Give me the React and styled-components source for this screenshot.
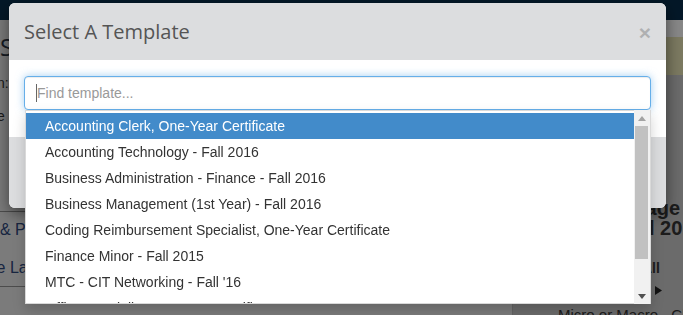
import React from "react";
import styled, { createGlobalStyle } from "styled-components";

const Global = createGlobalStyle`
  html, body { margin: 0; padding: 0; }
  body { font-family: "Liberation Sans", Arial, sans-serif; background: #e0e0e0; }
  * { box-sizing: border-box; }
`;

const Page = styled.div`
  position: relative;
  width: 683px;
  height: 315px;
  overflow: hidden;
  display: flex;
  flex-direction: column;
  background: #e0e0e0;
`;

const Navbar = styled.div`
  height: 20px;
  flex: none;
  background: #092d49;
`;

const Main = styled.div`
  flex: 1;
  display: grid;
  grid-template-columns: 513px 1fr;
`;

const LeftCol = styled.div`
  border-right: 1px solid #b5b5b5;
  display: flex;
  flex-direction: column;
  color: #2e2e2e;
`;

const PageTitle = styled.h1`
  margin: 14px 0 0;
  font: 400 24px/26px "Open Sans", sans-serif;
  color: #2a3340;
`;

const MetaLine = styled.div`
  margin: 13px 0 0 -3px;
  font-size: 14px;
  line-height: 20px;
  color: #333;
`;

const LinkBlock = styled.div`
  margin-top: 85px;
  border-top: 1px solid #8a8a8a;
  border-bottom: 1px solid #8a8a8a;
  display: flex;
  flex-direction: column;
  gap: 2px;
`;

const PlanLink = styled.div`
  font-size: 16px;
  line-height: 36px;
  color: #2c4577;
  margin-left: ${(p) => p.$shift || 0}px;
`;

const RightCol = styled.div`
  background: #c3c3c3;
  display: flex;
  flex-direction: column;
`;

const SubBar = styled.div`
  height: 17px;
  background: #f8f8f8;
`;

const Notice = styled.div`
  height: 38px;
  background: #e2deb1;
  display: flex;
  align-items: center;
  justify-content: flex-end;
  padding-right: 11px;
  font-size: 14px;
  color: #3a3520;
`;

const RightBody = styled.div`
  padding: 123px 0 0 45px;
  display: flex;
  flex-direction: column;
  color: #333;
`;

const CardTitle = styled.div`
  margin-left: 62px;
  font: 700 20px/20px "Liberation Sans", Arial, sans-serif;
  white-space: nowrap;
`;

const FilterLabel = styled.div`
  margin: 20px 0 0 84px;
  font: 700 14px/20px "Liberation Sans", Arial, sans-serif;
`;

const Caret = styled.svg`
  margin: 8px 0 0 97px;
  display: block;
`;

const CourseLine = styled.div`
  margin-top: 10px;
  font-size: 15px;
  line-height: 20px;
  white-space: nowrap;
`;

const Backdrop = styled.div`
  position: absolute;
  inset: 0;
  background: rgba(0, 0, 0, 0.45);
`;

const Modal = styled.div`
  position: absolute;
  left: 9px;
  top: 3px;
  width: 657px;
  border-radius: 6px;
  background: #fff;
  box-shadow: 0 5px 15px rgba(0, 0, 0, 0.5);
  display: flex;
  flex-direction: column;
`;

const ModalHeader = styled.div`
  background: #dcdddf;
  border-radius: 6px 6px 0 0;
  padding: 15px;
  display: flex;
  justify-content: space-between;
  align-items: flex-start;
`;

const ModalTitle = styled.h4`
  margin: 0;
  font: 400 20px/27px "Open Sans", sans-serif;
  color: #555;
`;

const CloseButton = styled.button`
  border: 0;
  background: none;
  padding: 0;
  margin-top: 4px;
  font: 700 21px/1 "Liberation Sans", Arial, sans-serif;
  color: #000;
  opacity: 0.2;
  cursor: pointer;
`;

const ModalBody = styled.div`
  padding: 16px 15px 27px;
`;

const SearchWrap = styled.div`
  position: relative;
`;

const SearchInput = styled.input`
  display: block;
  width: 100%;
  height: 34px;
  padding: 6px 12px;
  font: 400 14px "Liberation Sans", Arial, sans-serif;
  color: #555;
  border: 1px solid #66afe9;
  border-radius: 4px;
  outline: 0;
  caret-color: transparent;
  box-shadow: inset 0 1px 1px rgba(0, 0, 0, 0.075), 0 0 8px rgba(102, 175, 233, 0.6);
  &::placeholder { color: #999; }
`;

const TextCursor = styled.span`
  position: absolute;
  left: 12px;
  top: 8px;
  width: 1px;
  height: 18px;
  background: #666;
  pointer-events: none;
`;

const ModalFooter = styled.div`
  height: 71px;
  background: #dcdddf;
  border-radius: 0 0 6px 6px;
`;

const Dropdown = styled.div`
  position: absolute;
  top: 100%;
  left: 1px;
  right: 0;
  height: 194px;
  background: #fff;
  border: 1px solid rgba(0, 0, 0, 0.15);
  box-shadow: 0 6px 12px rgba(0, 0, 0, 0.175);
  display: flex;
  z-index: 2;
`;

const OptionList = styled.ul`
  flex: 1;
  margin: 0;
  padding: 2px 0 0;
  list-style: none;
  overflow: hidden;
`;

const Option = styled.li`
  padding: 0 19px;
  font: 400 14px/26px "Liberation Sans", Arial, sans-serif;
  color: ${(p) => (p.$active ? "#fff" : "#333")};
  background: ${(p) => (p.$active ? "#428bca" : "transparent")};
  white-space: nowrap;
`;

const ScrollTrack = styled.div`
  width: 16px;
  flex: none;
  margin-top: -1px;
  margin-bottom: -1px;
  background: #f1f1f1;
  display: flex;
  flex-direction: column;
`;

const ScrollArrow = styled.div`
  height: 16px;
  display: flex;
  align-items: center;
  justify-content: center;
`;

const ScrollThumb = styled.div`
  height: 133px;
  margin: 0 2px 0 1px;
  background: #c1c1c1;
`;

const ScrollSpacer = styled.div`
  flex: 1;
`;

const templates = [
  "Accounting Clerk, One-Year Certificate",
  "Accounting Technology - Fall 2016",
  "Business Administration - Finance - Fall 2016",
  "Business Management (1st Year) - Fall 2016",
  "Coding Reimbursement Specialist, One-Year Certificate",
  "Finance Minor - Fall 2015",
  "MTC - CIT Networking - Fall '16",
  "Office Specialist, One-Year Certificate",
  "Payroll Clerk - Fall 2016",
];

export default function App() {
  return (
    <>
      <Global />
      <Page>
        <Navbar />
        <Main>
          <LeftCol>
            <PageTitle>Schedule Planner</PageTitle>
            <MetaLine>n: Spring 2017</MetaLine>
            <MetaLine>e Student</MetaLine>
            <LinkBlock>
              <PlanLink>&amp; Programs</PlanLink>
              <PlanLink $shift={-7}>le Language Courses</PlanLink>
            </LinkBlock>
          </LeftCol>
          <RightCol>
            <SubBar />
            <Notice>Submit</Notice>
            <RightBody>
              <CardTitle>
                Usage
                <br />
                Fall 2016
              </CardTitle>
              <FilterLabel>All</FilterLabel>
              <Caret width="7" height="9" viewBox="0 0 7 9">
                <polygon points="0,0 7,4.5 0,9" fill="#222" />
              </Caret>
              <CourseLine>Micro or Macro - Choose One</CourseLine>
            </RightBody>
          </RightCol>
        </Main>
        <Backdrop />
        <Modal>
          <ModalHeader>
            <ModalTitle>Select A Template</ModalTitle>
            <CloseButton aria-label="Close">×</CloseButton>
          </ModalHeader>
          <ModalBody>
            <SearchWrap>
              <SearchInput autoFocus placeholder="Find template..." />
              <TextCursor />
              <Dropdown>
                <OptionList>
                  {templates.map((t, i) => (
                    <Option key={t} $active={i === 0}>
                      {t}
                    </Option>
                  ))}
                </OptionList>
                <ScrollTrack>
                  <ScrollArrow>
                    <svg width="8" height="5" viewBox="0 0 8 5">
                      <polygon points="0,5 4,0 8,5" fill="#a3a3a3" />
                    </svg>
                  </ScrollArrow>
                  <ScrollThumb />
                  <ScrollSpacer />
                  <ScrollArrow>
                    <svg width="8" height="5" viewBox="0 0 8 5">
                      <polygon points="0,0 8,0 4,5" fill="#505050" />
                    </svg>
                  </ScrollArrow>
                </ScrollTrack>
              </Dropdown>
            </SearchWrap>
          </ModalBody>
          <ModalFooter />
        </Modal>
      </Page>
    </>
  );
}
